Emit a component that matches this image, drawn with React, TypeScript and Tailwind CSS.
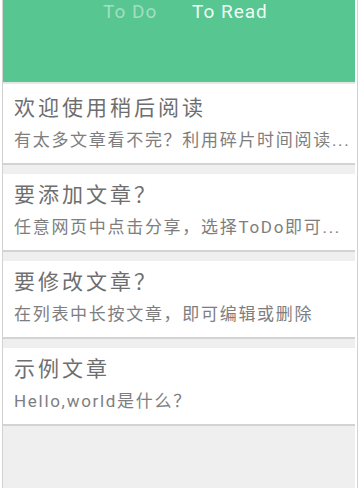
const articles = [
  { title: '欢迎使用稍后阅读', summary: '有太多文章看不完？利用碎片时间阅读...' },
  { title: '要添加文章？', summary: '任意网页中点击分享，选择ToDo即可...' },
  { title: '要修改文章？', summary: '在列表中长按文章，即可编辑或删除' },
  { title: '示例文章', summary: 'Hello,world是什么？' },
]

export default function App() {
  return (
    <div
      className="w-[360px] h-[488px] bg-white px-[2px] overflow-hidden"
      style={{ fontFamily: "Roboto, 'Noto Sans CJK SC', sans-serif" }}
    >
      <div className="h-full border-x border-[#d2d2d2] bg-white">
        <div className="h-full mr-[2px] bg-[#efefef] flex flex-col">
          {/* tab header */}
          <div className="h-[82px] bg-[#57c690] flex items-start pt-[2px] pl-[100px]">
            <div className="w-[89px] text-[19px] leading-none tracking-[1px] text-[#a3dec0]">To Do</div>
            <div className="text-[19px] leading-none tracking-[1px] text-[#effbf5]">To Read</div>
          </div>

          <div className="h-[2px] bg-[#e6e6e6]" />

          {articles.map((a, i) => (
            <div
              key={a.title}
              className={`bg-white border-b-2 border-[#d3d3d3] pl-[11px] pr-1 ${
                i === 0 ? 'pt-[11px] pb-[12px]' : 'mt-[9px] pt-[8px] pb-[12px]'
              }`}
            >
              <div className="text-[21px] leading-[26px] tracking-[3px] text-[#6e6e6e] whitespace-nowrap">
                {a.title}
              </div>
              <div className="mt-[8px] text-[17px] leading-[22px] tracking-[1.7px] text-[#7e7e7e] whitespace-nowrap">
                {a.summary}
              </div>
            </div>
          ))}
        </div>
      </div>
    </div>
  )
}
